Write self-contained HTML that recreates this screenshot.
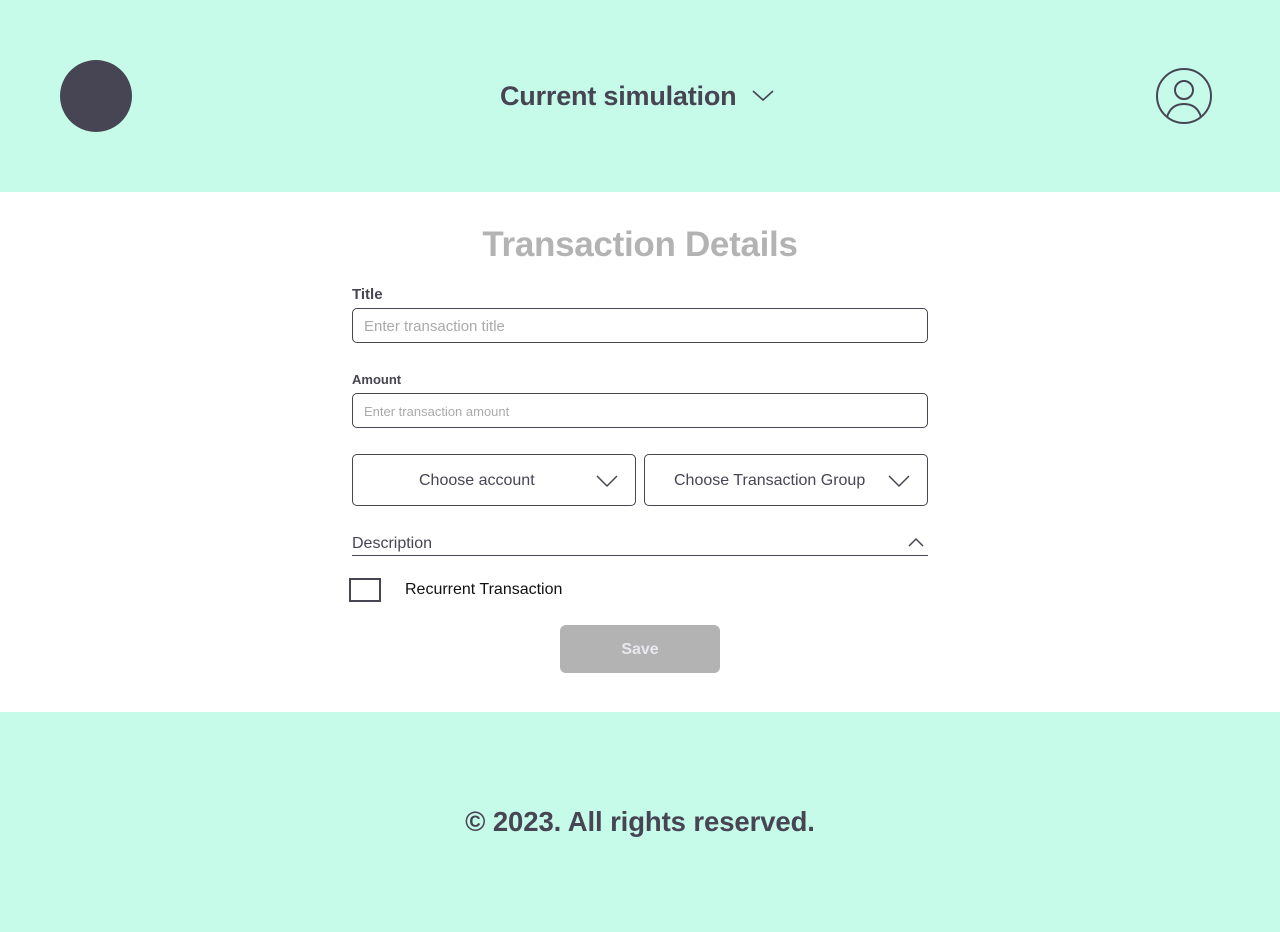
<!DOCTYPE html>
<html><head><meta charset="utf-8"><style>
*{margin:0;padding:0;box-sizing:border-box}
body{width:1280px;height:932px;font-family:"Liberation Sans",sans-serif;background:#fff;position:relative;overflow:hidden;color:#474553}
.abs{position:absolute}
header{position:absolute;left:0;top:0;width:1280px;height:192px;background:#c6fbe9}
footer{position:absolute;left:0;top:712px;width:1280px;height:220px;background:#c6fbe9}
.input{position:absolute;left:352px;width:576px;height:35px;border:1px solid #474553;border-radius:5px;color:#aaa;padding-left:11px;display:flex;align-items:center}
.sel{position:absolute;top:454px;width:284px;height:52px;border:1px solid #474553;border-radius:5px;font-size:16px;color:#474553;display:flex;align-items:center}
</style></head><body>
<header>
<div class="abs" style="left:500px;top:81px;font-size:27px;font-weight:bold;letter-spacing:-0.2px;color:#474553">Current simulation</div>
<div class="abs" style="left:60px;top:60px;width:72px;height:72px;border-radius:50%;background:#474553"></div>
<svg class="abs" style="left:752px;top:89px" width="22" height="14" viewBox="0 0 22 14"><path d="M1 2 L11 11 L21 2" fill="none" stroke="#474553" stroke-width="1.6"/></svg>
<svg class="abs" style="left:1155px;top:67px" width="58" height="58" viewBox="0 0 58 58"><circle cx="29" cy="29" r="27" fill="none" stroke="#474553" stroke-width="2"/><circle cx="29" cy="23" r="9" fill="none" stroke="#474553" stroke-width="2"/><path d="M12 50 Q16 37 29 37 Q42 37 46 50" fill="none" stroke="#474553" stroke-width="2"/></svg>
</header>
<div class="abs" style="left:0;width:1280px;top:225px;text-align:center;font-size:35px;font-weight:bold;color:#b3b3b3;letter-spacing:-0.3px">Transaction Details</div>
<div class="abs" style="left:352px;top:286px;font-size:15px;font-weight:bold;color:#474553">Title</div>
<div class="input" style="top:308px;font-size:15px;padding-top:2px">Enter transaction title</div>
<div class="abs" style="left:352px;top:372px;font-size:13px;font-weight:bold;color:#474553">Amount</div>
<div class="input" style="top:393px;font-size:13px;padding-top:2px">Enter transaction amount</div>
<div class="sel" style="left:352px"><span style="position:absolute;left:66px;top:17px">Choose account</span>
<svg class="abs" style="left:243px;top:19px" width="22" height="14" viewBox="0 0 22 14"><path d="M1 2 L11 12 L21 2" fill="none" stroke="#474553" stroke-width="1.5"/></svg></div>
<div class="sel" style="left:644px"><span style="position:absolute;left:29px;top:17px">Choose Transaction Group</span>
<svg class="abs" style="left:243px;top:19px" width="22" height="14" viewBox="0 0 22 14"><path d="M1 2 L11 12 L21 2" fill="none" stroke="#474553" stroke-width="1.5"/></svg></div>
<div class="abs" style="left:352px;top:535px;font-size:16px;color:#474553">Description</div>
<svg class="abs" style="left:908px;top:537px" width="16" height="11" viewBox="0 0 16 11"><path d="M1 9 L8 2 L15 9" fill="none" stroke="#474553" stroke-width="1.5"/></svg>
<div class="abs" style="left:352px;top:555px;width:576px;height:1px;background:#474553"></div>
<div class="abs" style="left:349px;top:578px;width:32px;height:24px;border:2px solid #474553"></div>
<div class="abs" style="left:405px;top:581px;font-size:16px;color:#111">Recurrent Transaction</div>
<div class="abs" style="left:560px;top:625px;width:160px;height:48px;background:#b3b3b3;border-radius:6px;color:#e8e8f0;font-weight:bold;font-size:16px;display:flex;align-items:center;justify-content:center;padding-top:2px">Save</div>
<footer><div class="abs" style="left:0;width:1280px;top:94px;text-align:center;font-size:27.5px;font-weight:bold;letter-spacing:-0.1px;color:#474553">© 2023. All rights reserved.</div></footer>
</body></html>
